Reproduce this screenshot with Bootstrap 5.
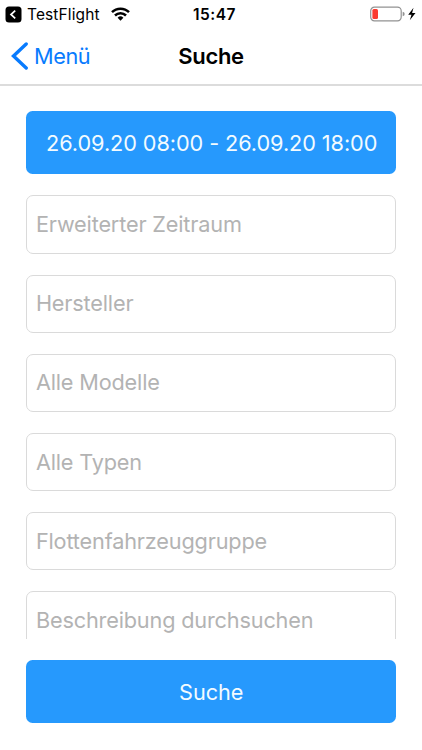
<!DOCTYPE html>
<html lang="de">
<head>
<meta charset="utf-8">
<meta name="viewport" content="width=device-width, initial-scale=1">
<title>Suche</title>
<link href="https://cdn.jsdelivr.net/npm/bootstrap@5.3.0/dist/css/bootstrap.min.css" rel="stylesheet">
<style>
body{font-family:Inter,"Liberation Sans",sans-serif;font-size:21.7px;line-height:28px;color:#000;background:#fff}
svg{display:block;flex:none}
.screen{width:422px;height:750px}
.statusbar{height:28px;padding:0 5px;font-size:15.5px;line-height:28px}
.statusbar .side{flex:1 1 0}
.clock{letter-spacing:.5px;padding:1px 0 0 7px}
.carrier{margin-left:5px;margin-right:11px;padding-top:1px;letter-spacing:.12px}
.titlebar{height:58px;border-bottom:2px solid #dcdcdc;padding:0 11px}
.titlebar .side{flex:1 1 0}
.back{color:#087bfe;letter-spacing:-.4px}
.back-label{margin-left:6px}
.heading{font-size:22px;letter-spacing:-.35px}
.fields{height:553px;padding:25px 26px 0 26.4px}
.action{--bs-btn-bg:#2699fd;--bs-btn-hover-bg:#2699fd;--bs-btn-color:#f3fbff;--bs-btn-border-width:0;--bs-btn-border-radius:6.5px;--bs-btn-font-size:21.7px;--bs-btn-line-height:28px;height:63.4px;flex:none;letter-spacing:-.08px}
.period{margin-bottom:21px;padding:0 0 0 1px}
.field{height:58.2px;flex:none;margin-bottom:21px;border:1.3px solid #dadada;border-radius:7px;padding:0 8px 1px 8.5px;font-size:21.7px;line-height:28px;letter-spacing:-.17px;color:#000}
.field::placeholder{color:#b3b3b3;opacity:1}
.foot{padding:21px 26px 0 26.4px}
</style>
</head>
<body>
<main class="screen d-flex flex-column overflow-hidden">
<div class="statusbar d-flex align-items-center">
<div class="side d-flex align-items-center">
<svg width="17" height="17" viewBox="0 0 17 17"><rect x=".5" y=".5" width="16" height="16" rx="3.5"/><path d="M10.2 4.7 6 8.5l4.200 3.800" fill="none" stroke="#fff" stroke-width="1.700"/></svg>
<span class="carrier">TestFlight</span>
<svg width="19" height="14" viewBox="0 0 19 14" fill="none" stroke="#000" stroke-width="2.500"><path d="M1 5.200a12 12 0 0 1 17 0M4 8.500a7.800 7.800 0 0 1 11 0"/><path d="M9.500 13.700 6.600 10.800a4.100 4.100 0 0 1 5.800 0z" fill="#000" stroke="none"/></svg>
</div>
<span class="clock fw-semibold">15:47</span>
<div class="side d-flex align-items-center justify-content-end">
<svg width="47" height="16" viewBox="0 0 47 16"><rect x=".7" y="1.200" width="30.500" height="13.600" rx="3.700" fill="none" stroke="#929292" stroke-width="1.200"/><rect x="2.400" y="3" width="5.600" height="10" rx="1.500" fill="#fa3b30"/><path d="M32.700 5.700q2 .6 2 2.300t-2 2.300z" fill="#929292"/><path d="M43.500 1.800 38.200 8.800h3.300l-1.700 5.500 5.700-7.200h-3.400z"/></svg>
</div>
</div>
<header class="titlebar d-flex align-items-center">
<div class="side d-flex"><a href="#" class="back d-flex align-items-center text-decoration-none"><svg width="17" height="28" viewBox="0 0 17 28" fill="none" stroke="currentColor" stroke-width="3.400" stroke-linecap="round"><path d="M15.200 2 2.500 14l12.700 12"/></svg><span class="back-label">Menü</span></a></div>
<h1 class="heading fw-semibold m-0">Suche</h1>
<div class="side"></div>
</header>
<form class="fields d-flex flex-column overflow-hidden">
<button type="button" class="btn action period w-100">26.09.20 08:00 - 26.09.20 18:00</button>
<input class="form-control field" placeholder="Erweiterter Zeitraum">
<input class="form-control field" placeholder="Hersteller">
<input class="form-control field" placeholder="Alle Modelle">
<input class="form-control field" placeholder="Alle Typen">
<input class="form-control field" placeholder="Flottenfahrzeuggruppe">
<input class="form-control field" placeholder="Beschreibung durchsuchen">
</form>
<footer class="foot"><button type="button" class="btn action w-100">Suche</button></footer>
</main>
<script src="https://cdn.jsdelivr.net/npm/bootstrap@5.3.0/dist/js/bootstrap.bundle.min.js"></script>
</body>
</html>
